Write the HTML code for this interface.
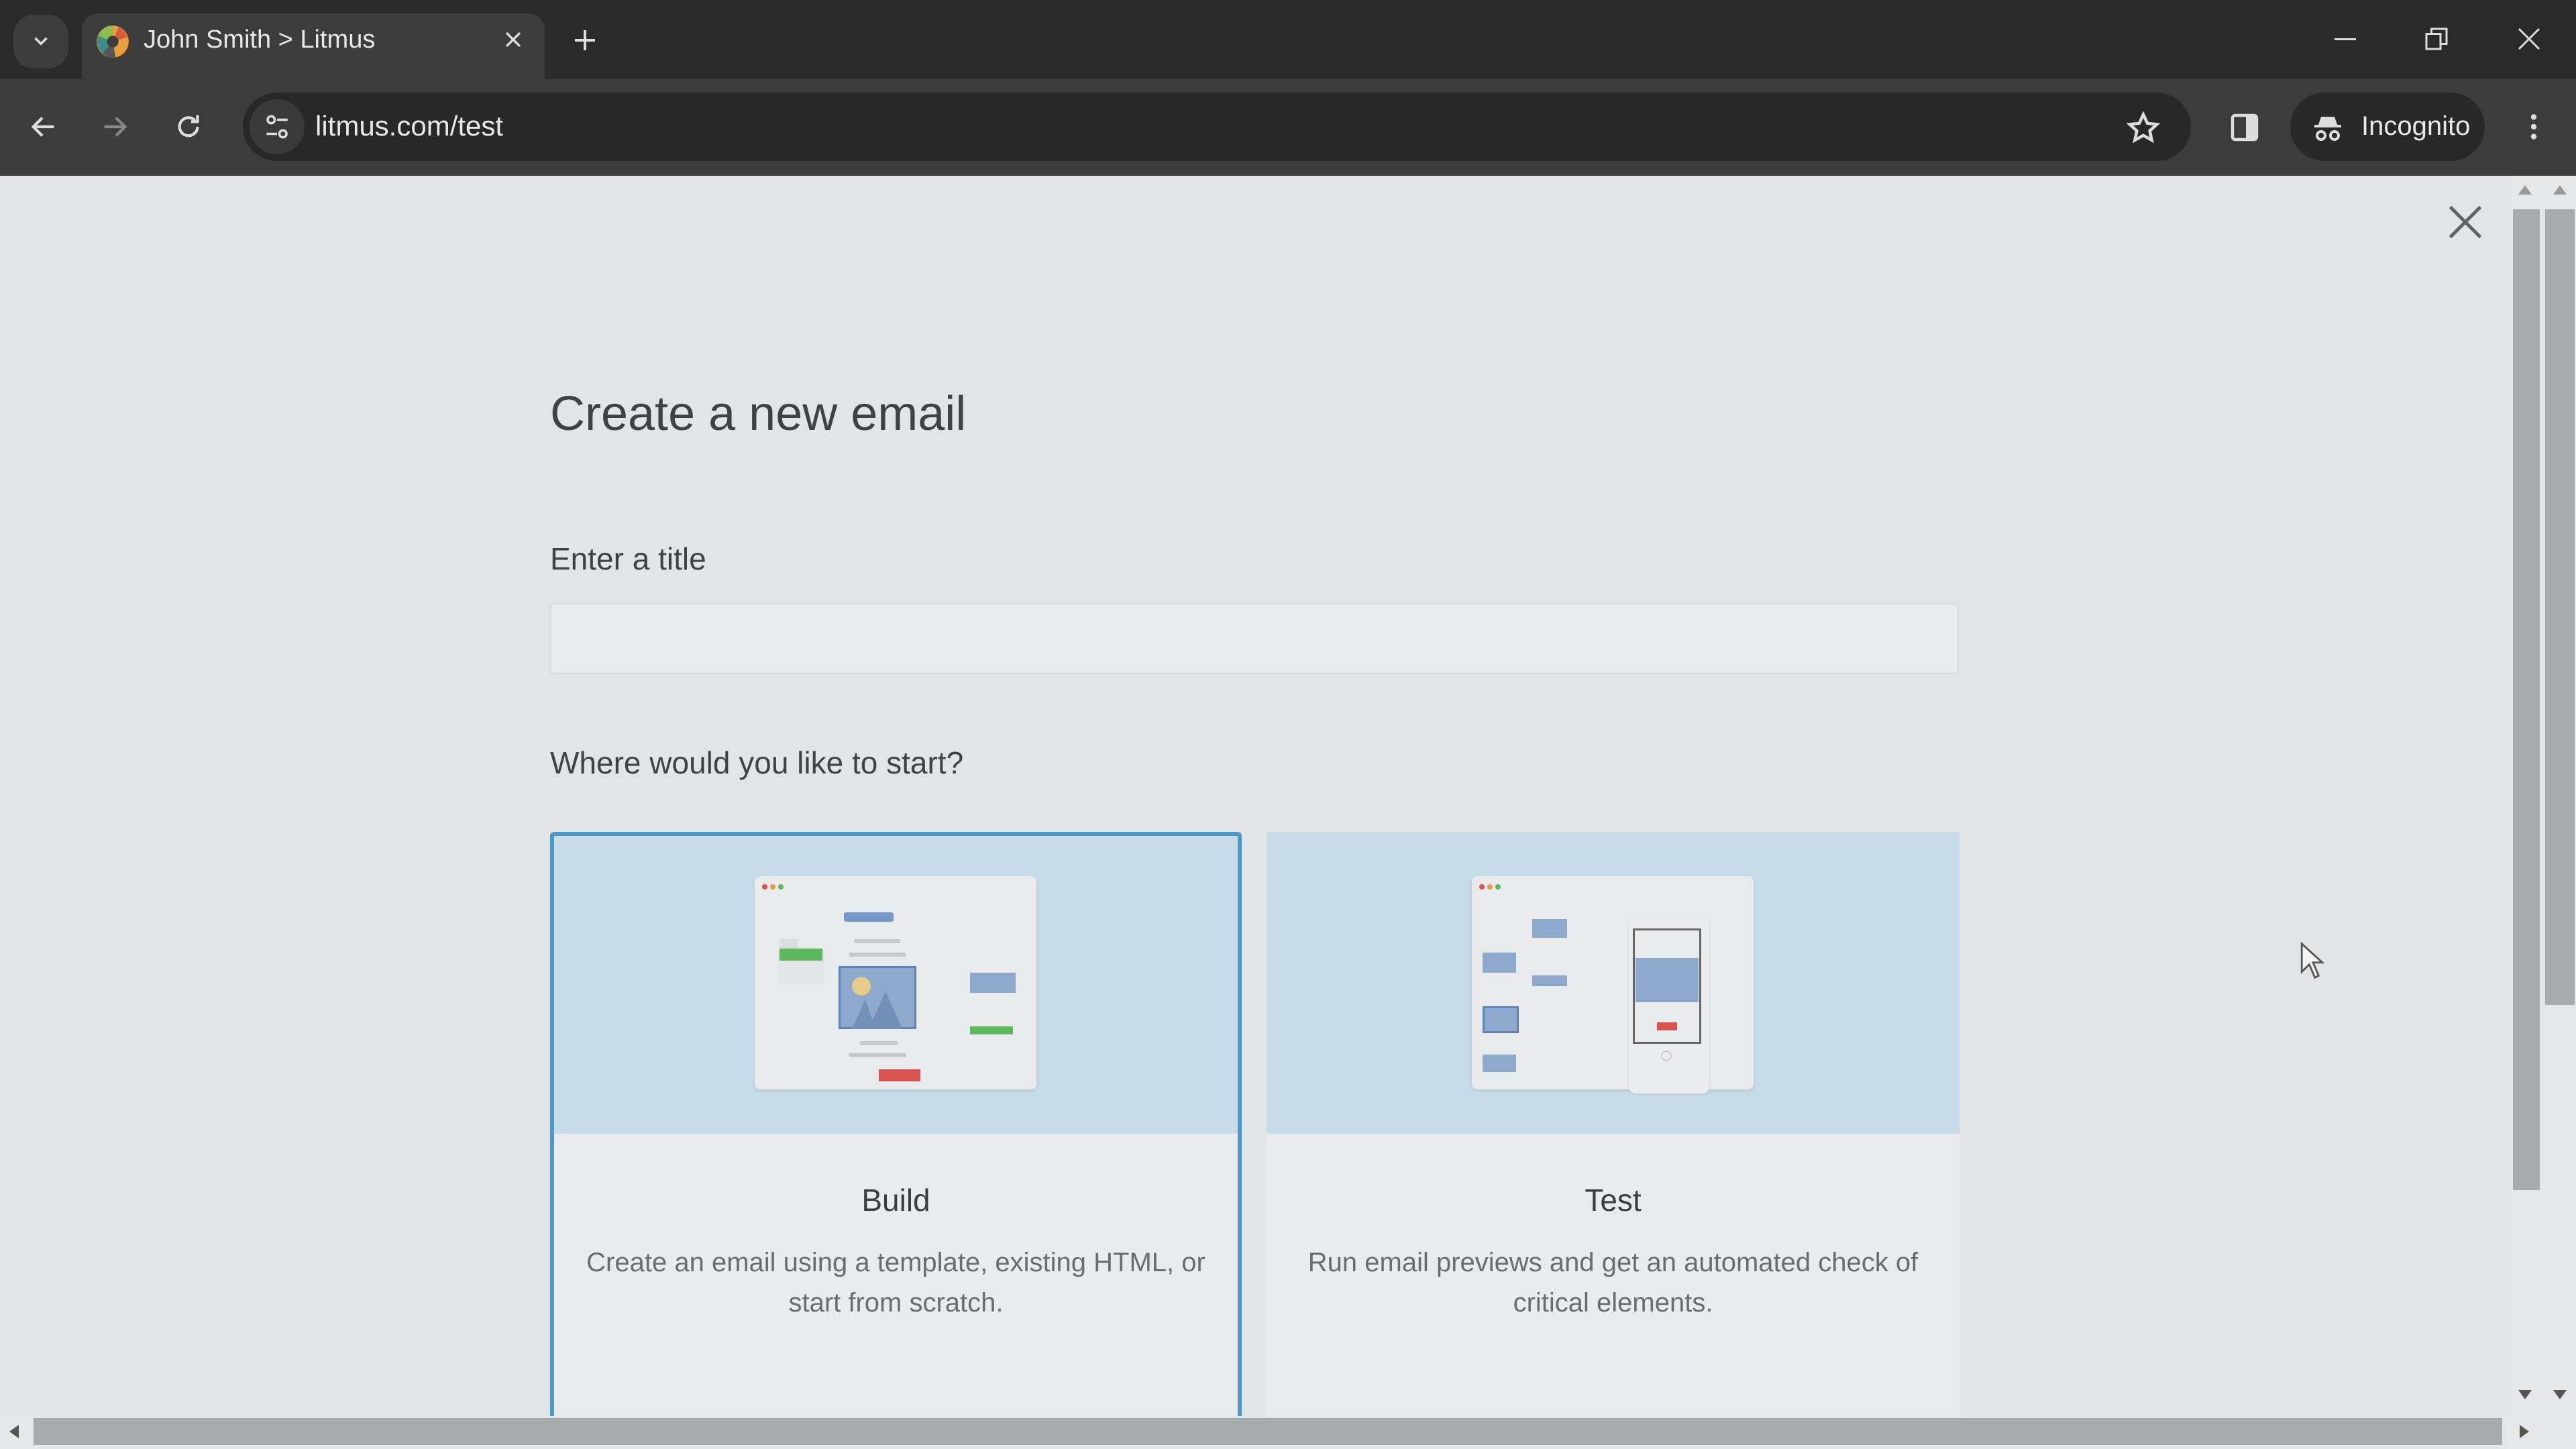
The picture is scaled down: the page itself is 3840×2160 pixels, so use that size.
<!DOCTYPE html>
<html><head><meta charset="utf-8"><style>
*{margin:0;padding:0;box-sizing:border-box}
body{width:3840px;height:2160px;overflow:hidden;background:#e3e4e6;font-family:"Liberation Sans",sans-serif;position:relative}
.abs{position:absolute}
.tabbar{left:0;top:0;width:3840px;height:118px;background:#2a2a2a}
.toolbar{left:0;top:118px;width:3840px;height:144px;background:#3c3c3c}
.tab{left:122px;top:20px;width:690px;height:100px;background:#3c3c3c;border-radius:24px 24px 0 0}
.omni{left:362px;top:138px;width:2904px;height:102px;background:#282828;border-radius:51px}
.txt{color:#e8e8e8}
.content{left:0;top:262px;width:3744px;height:1849px;background:#e3e4e6}
.card{background:#eaebec;border-radius:6px;overflow:hidden}
.blue{background:#c6dde7}
</style></head><body>
<div class="abs tabbar"></div>
<div class="abs" style="left:20px;top:22px;width:82px;height:80px;background:#3c3c3c;border-radius:30px"></div>
<svg class="abs" style="left:44px;top:44px" width="34" height="34" viewBox="0 0 24 24"><path d="M6 9l6 6 6-6" stroke="#ddd" stroke-width="2.5" fill="none"/></svg>
<div class="abs tab"></div>
<svg class="abs" style="left:142px;top:36px" width="52" height="52" viewBox="0 0 24 24"><circle cx="12" cy="12" r="11" fill="#e9a03b"/><path d="M12 12L12 1A11 11 0 0 0 2 8z" fill="#8bbf4f"/><path d="M12 12L2 8A11 11 0 0 0 5 20z" fill="#3f8c8c"/><path d="M12 12L5 20A11 11 0 0 0 14 23z" fill="#555"/><path d="M12 12L22 9A11 11 0 0 0 16 2z" fill="#d95a3a"/><circle cx="12" cy="12" r="4" fill="#3c3c3c"/></svg>
<div class="abs txt" style="left:214px;top:38px;font-size:38px">John Smith &gt; Litmus</div>
<svg class="abs" style="left:748px;top:42px" width="34" height="34" viewBox="0 0 24 24"><path d="M5 5l14 14M19 5L5 19" stroke="#ddd" stroke-width="2.4"/></svg>
<svg class="abs" style="left:852px;top:40px" width="40" height="40" viewBox="0 0 24 24"><path d="M12 3v18M3 12h18" stroke="#ddd" stroke-width="2.4"/></svg>
<div class="abs" style="left:3480px;top:57px;width:32px;height:3px;background:#ddd"></div>
<svg class="abs" style="left:3614px;top:40px" width="36" height="36" viewBox="0 0 24 24"><rect x="2" y="7" width="14" height="15" stroke="#ddd" stroke-width="2" fill="none"/><path d="M7 7V2h15v15h-6" stroke="#ddd" stroke-width="2" fill="none"/></svg>
<svg class="abs" style="left:3752px;top:40px" width="36" height="36" viewBox="0 0 24 24"><path d="M2 2l20 20M22 2L2 22" stroke="#ddd" stroke-width="2"/></svg>
<div class="abs toolbar"></div>
<div class="abs omni"></div>
<svg class="abs" style="left:42px;top:166px" width="46" height="46" viewBox="0 0 24 24"><path d="M20 12H5M11 5l-7 7 7 7" stroke="#ddd" stroke-width="2.2" fill="none"/></svg>
<svg class="abs" style="left:148px;top:166px" width="46" height="46" viewBox="0 0 24 24"><path d="M4 12h15M13 5l7 7-7 7" stroke="#888" stroke-width="2.2" fill="none"/></svg>
<svg class="abs" style="left:258px;top:166px" width="46" height="46" viewBox="0 0 24 24"><path d="M19 12a7 7 0 1 1-2-5" stroke="#ddd" stroke-width="2.2" fill="none"/><path d="M19 3v5h-5" stroke="#ddd" stroke-width="2.2" fill="none"/></svg>
<div class="abs" style="left:372px;top:148px;width:82px;height:82px;border-radius:41px;background:#3a3a3a"></div>
<svg class="abs" style="left:392px;top:168px" width="42" height="42" viewBox="0 0 24 24"><circle cx="7" cy="6" r="3" stroke="#ddd" stroke-width="2" fill="none"/><path d="M12 6h9M3 18h9" stroke="#ddd" stroke-width="2"/><circle cx="17" cy="18" r="3" stroke="#ddd" stroke-width="2" fill="none"/></svg>
<div class="abs txt" style="left:470px;top:164px;font-size:42px">litmus.com/test</div>
<svg class="abs" style="left:3168px;top:164px" width="54" height="54" viewBox="0 0 24 24"><path d="M12 3l2.7 5.8 6.3.7-4.7 4.3 1.3 6.2L12 16.8 6.4 20l1.3-6.2L3 9.5l6.3-.7z" stroke="#ddd" stroke-width="2" fill="none"/></svg>
<svg class="abs" style="left:3322px;top:166px" width="48" height="48" viewBox="0 0 24 24"><rect x="3" y="3" width="18" height="18" rx="2" stroke="#ddd" stroke-width="2.2" fill="none"/><rect x="13" y="4" width="7" height="16" fill="#ddd"/></svg>
<div class="abs" style="left:3414px;top:138px;width:290px;height:102px;border-radius:51px;background:#282828"></div>
<svg class="abs" style="left:3446px;top:166px" width="48" height="48" viewBox="0 0 24 24"><path d="M7 4h10l2 6H5z" fill="#ddd"/><path d="M2 11h20" stroke="#ddd" stroke-width="2"/><circle cx="7" cy="18" r="3" stroke="#ddd" stroke-width="2" fill="none"/><circle cx="17" cy="18" r="3" stroke="#ddd" stroke-width="2" fill="none"/></svg>
<div class="abs txt" style="left:3520px;top:166px;font-size:40px">Incognito</div>
<svg class="abs" style="left:3752px;top:164px" width="50" height="50" viewBox="0 0 24 24"><circle cx="12" cy="5" r="2" fill="#ddd"/><circle cx="12" cy="12" r="2" fill="#ddd"/><circle cx="12" cy="19" r="2" fill="#ddd"/></svg>

<div class="abs content"></div>
<svg class="abs" style="left:3648px;top:304px" width="54" height="54" viewBox="0 0 24 24"><path d="M2 2l20 20M22 2L2 22" stroke="#606264" stroke-width="2.2"/></svg>

<div class="abs" style="left:820px;top:576px;font-size:72px;color:#3f4245">Create a new email</div>
<div class="abs" style="left:820px;top:806px;font-size:46px;color:#3f4245">Enter a title</div>
<div class="abs" style="left:820px;top:899px;width:2100px;height:106px;background:#e9eaeb;border:2px solid #d8dadc;border-radius:4px"></div>
<div class="abs" style="left:820px;top:1110px;font-size:46px;color:#3f4245">Where would you like to start?</div>

<div class="abs card" style="left:820px;top:1240px;width:1031px;height:880px;border:6px solid #4a98cc;border-bottom:none"></div>
<div class="abs blue" style="left:826px;top:1246px;width:1019px;height:444px"></div>
<div class="abs card" style="left:1888px;top:1240px;width:1033px;height:880px"></div>
<div class="abs blue" style="left:1888px;top:1240px;width:1033px;height:450px"></div>

<!-- build illustration -->
<div class="abs" style="left:1125px;top:1306px;width:420px;height:318px;background:#e9eaeb;border-radius:8px;box-shadow:0 2px 6px rgba(0,0,0,.1)"></div>
<div class="abs" style="left:1136px;top:1318px;width:8px;height:8px;border-radius:50%;background:#d9534f"></div>
<div class="abs" style="left:1148px;top:1318px;width:8px;height:8px;border-radius:50%;background:#e0a040"></div>
<div class="abs" style="left:1160px;top:1318px;width:8px;height:8px;border-radius:50%;background:#5cb85c"></div>
<div class="abs" style="left:1162px;top:1400px;width:28px;height:16px;background:#dcdddf"></div>
<div class="abs" style="left:1160px;top:1416px;width:68px;height:52px;background:#e3e4e6"></div>
<div class="abs" style="left:1162px;top:1414px;width:64px;height:18px;background:#5cb85c"></div>
<div class="abs" style="left:1258px;top:1360px;width:74px;height:14px;background:#7399c9;border-radius:3px"></div>
<div class="abs" style="left:1274px;top:1400px;width:68px;height:6px;background:#c8c9cb"></div>
<div class="abs" style="left:1266px;top:1420px;width:84px;height:6px;background:#c8c9cb"></div>
<div class="abs" style="left:1250px;top:1440px;width:116px;height:94px;background:#8fa9cc;border:3px solid #5d84b8"></div>
<div class="abs" style="left:1270px;top:1456px;width:28px;height:28px;border-radius:50%;background:#e5cc88"></div>
<svg class="abs" style="left:1250px;top:1470px" width="116" height="64" viewBox="0 0 116 64"><path d="M20 64L40 20 55 64zM45 64L70 8 95 64z" fill="#7390bb"/></svg>
<div class="abs" style="left:1446px;top:1450px;width:68px;height:30px;background:#8fa9cc"></div>
<div class="abs" style="left:1446px;top:1530px;width:64px;height:12px;background:#5cb85c"></div>
<div class="abs" style="left:1282px;top:1552px;width:56px;height:6px;background:#c8c9cb"></div>
<div class="abs" style="left:1266px;top:1570px;width:84px;height:6px;background:#c8c9cb"></div>
<div class="abs" style="left:1310px;top:1594px;width:62px;height:18px;background:#d9534f"></div>

<!-- test illustration -->
<div class="abs" style="left:2194px;top:1306px;width:420px;height:318px;background:#e9eaeb;border-radius:8px;box-shadow:0 2px 6px rgba(0,0,0,.1)"></div>
<div class="abs" style="left:2205px;top:1318px;width:8px;height:8px;border-radius:50%;background:#d9534f"></div>
<div class="abs" style="left:2217px;top:1318px;width:8px;height:8px;border-radius:50%;background:#e0a040"></div>
<div class="abs" style="left:2229px;top:1318px;width:8px;height:8px;border-radius:50%;background:#5cb85c"></div>
<div class="abs" style="left:2210px;top:1420px;width:50px;height:30px;background:#8fa9cc"></div>
<div class="abs" style="left:2284px;top:1370px;width:52px;height:28px;background:#8fa9cc"></div>
<div class="abs" style="left:2210px;top:1500px;width:54px;height:40px;background:#8fa9cc;border:3px solid #5d84b8"></div>
<div class="abs" style="left:2284px;top:1454px;width:52px;height:16px;background:#8fa9cc"></div>
<div class="abs" style="left:2210px;top:1572px;width:50px;height:26px;background:#8fa9cc"></div>
<div class="abs" style="left:2428px;top:1370px;width:120px;height:260px;background:#ebeced;border-radius:10px;box-shadow:0 1px 4px rgba(0,0,0,.1)"></div>
<div class="abs" style="left:2434px;top:1384px;width:102px;height:172px;border:3px solid #666;background:#e9eaeb"></div>
<div class="abs" style="left:2438px;top:1428px;width:94px;height:66px;background:#8fa9cc"></div>
<div class="abs" style="left:2470px;top:1524px;width:30px;height:12px;background:#d9534f"></div>
<div class="abs" style="left:2476px;top:1566px;width:16px;height:16px;border-radius:50%;border:2px solid #ccc"></div>

<div class="abs" style="left:820px;top:1762px;width:1031px;text-align:center;font-size:46px;color:#3a3d40">Build</div>
<div class="abs" style="left:840px;top:1852px;width:991px;text-align:center;font-size:40px;line-height:60px;color:#6a6d70">Create an email using a template, existing HTML, or start from scratch.</div>
<div class="abs" style="left:1888px;top:1762px;width:1033px;text-align:center;font-size:46px;color:#3a3d40">Test</div>
<div class="abs" style="left:1908px;top:1852px;width:993px;text-align:center;font-size:40px;line-height:60px;color:#6a6d70">Run email previews and get an automated check of critical elements.</div>

<!-- cursor -->
<svg class="abs" style="left:3428px;top:1404px" width="40" height="56" viewBox="0 0 14 20"><path d="M1 1v15l4-4 3 7 2-1-3-7h5z" fill="#f4f4f4" stroke="#555" stroke-width="1"/></svg>

<!-- scrollbars -->
<div class="abs" style="left:3744px;top:262px;width:96px;height:1849px;background:#e6e7e8"></div>
<div class="abs" style="left:3746px;top:312px;width:40px;height:1462px;background:#a9aaab"></div>
<div class="abs" style="left:3794px;top:312px;width:44px;height:1186px;background:#a9aaab"></div>
<svg class="abs" style="left:3754px;top:276px" width="20" height="14"><path d="M0 14L10 0 20 14z" fill="#999"/></svg>
<svg class="abs" style="left:3806px;top:276px" width="20" height="14"><path d="M0 14L10 0 20 14z" fill="#999"/></svg>
<svg class="abs" style="left:3754px;top:2072px" width="20" height="14"><path d="M0 0L10 14 20 0z" fill="#555"/></svg>
<svg class="abs" style="left:3806px;top:2072px" width="20" height="14"><path d="M0 0L10 14 20 0z" fill="#555"/></svg>
<div class="abs" style="left:0;top:2111px;width:3840px;height:49px;background:#e6e7e8"></div>
<div class="abs" style="left:50px;top:2114px;width:3680px;height:40px;background:#a9aaab"></div>
<svg class="abs" style="left:14px;top:2124px" width="14" height="20"><path d="M14 0L0 10 14 20z" fill="#555"/></svg>
<svg class="abs" style="left:3756px;top:2124px" width="14" height="20"><path d="M0 0L14 10 0 20z" fill="#555"/></svg>
</body></html>
